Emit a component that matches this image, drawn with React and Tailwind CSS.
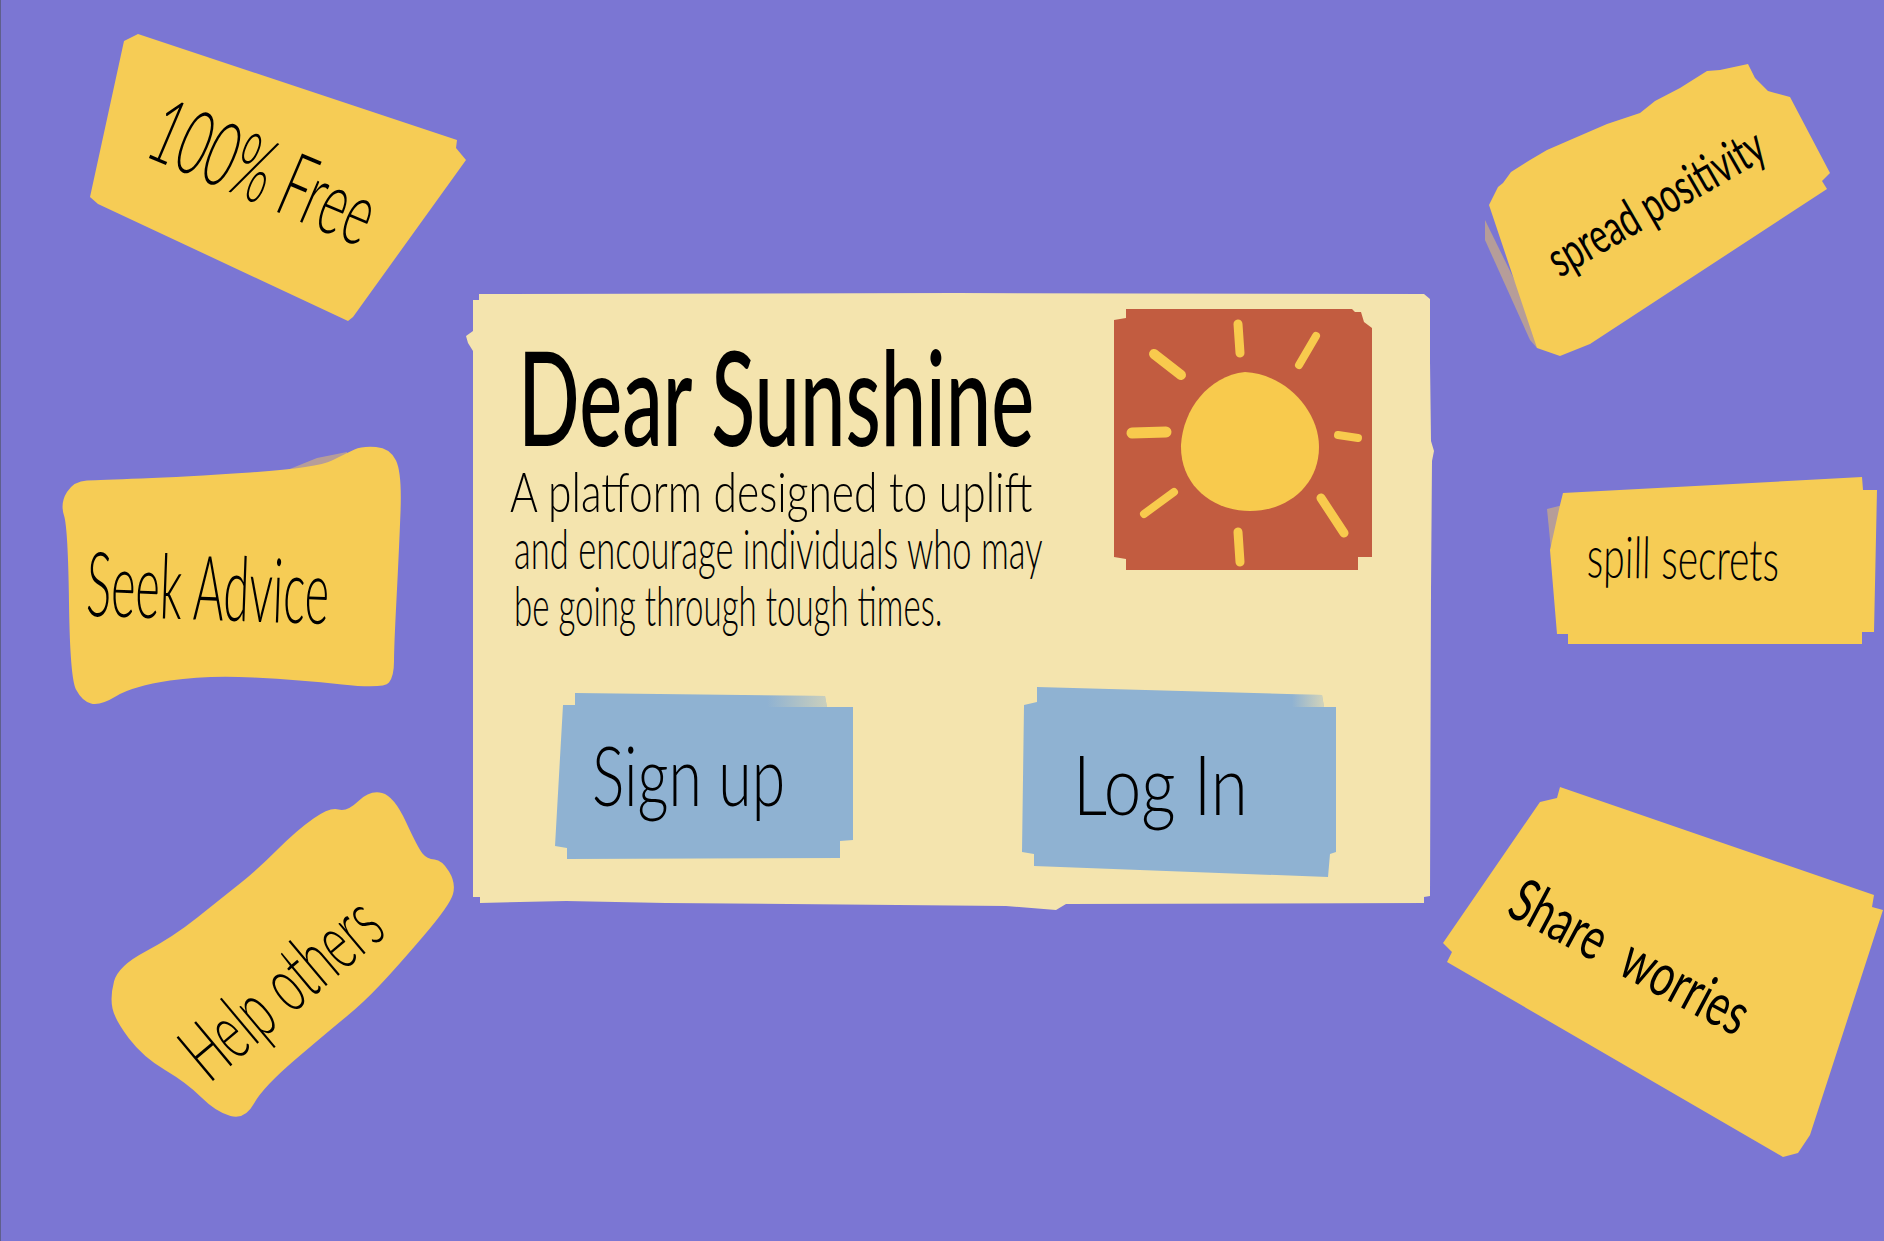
const HAND = "font-['Lato',sans-serif] text-black whitespace-nowrap leading-none";

// rounds a rough outline off through the midpoints of its edges
const smoothPath = (points) => {
  const pts = points.trim().split(/\s+/).map((p) => p.split(",").map(Number));
  const mid = (a, b) => [(a[0] + b[0]) / 2, (a[1] + b[1]) / 2];
  const start = mid(pts[pts.length - 1], pts[0]);
  let d = `M${start[0]},${start[1]}`;
  pts.forEach((p, i) => {
    const m = mid(p, pts[(i + 1) % pts.length]);
    d += ` Q${p[0]},${p[1]} ${m[0]},${m[1]}`;
  });
  return d + " Z";
};

// torn paper notes, points are taken in page coordinates
const Note = ({ box, viewBox, points, shadow, soft, children }) => (
  <div className={`absolute ${box}`}>
    <svg className="block w-full h-full overflow-visible" viewBox={viewBox}>
      {shadow && <polygon points={shadow} fill="#c9ab85" opacity="0.75" />}
      {soft ? <path d={smoothPath(points)} fill="#f6cc55" /> : <polygon points={points} fill="#f6cc55" />}
    </svg>
    {children}
  </div>
);

const Sun = () => (
  <svg className="block w-[258px] h-[261px]" viewBox="1114 309 258 261">
    <polygon
      points="1126,309 1352,309 1355,312 1361,312 1364,322 1372,328 1372,557 1358,557 1358,570 1126,570 1126,559 1114,557 1114,320 1126,318"
      fill="#c25c40"
    />
    <path
      d="M1181,445 C1183,410 1208,376 1245,372 C1285,374 1319,410 1319,447 C1319,485 1288,511 1250,511 C1212,511 1180,485 1181,445 Z"
      fill="#f8ca4d"
    />
    <g stroke="#f8ca4d" strokeLinecap="round" fill="none">
      <path d="M1238,324 L1240,353" strokeWidth="9" />
      <path d="M1316,336 L1299,365" strokeWidth="8" />
      <path d="M1154,354 L1181,375" strokeWidth="10" />
      <path d="M1132,433 L1166,432" strokeWidth="11" />
      <path d="M1338,435 L1358,438" strokeWidth="8" />
      <path d="M1174,492 L1144,514" strokeWidth="8" />
      <path d="M1321,498 L1344,533" strokeWidth="9" />
      <path d="M1238,532 L1240,562" strokeWidth="9" />
    </g>
  </svg>
);

export default function App() {
  return (
    <div className="relative w-full h-[1241px] overflow-hidden bg-[#7b76d3] border-l border-[#5f5f8c] pl-[465px] pt-[291px]">
      {/* Main card */}
      <div className="relative w-[970px] h-[619px] bg-[#f4e4ae] flex flex-col pl-[44px] pt-[18px] [clip-path:polygon(13px_3px,490px_2px,958px_3px,964px_8px,964px_70px,965px_150px,968px_160px,966px_170px,965px_300px,964px_605px,958px_606px,958px_612px,600px_613px,590px_619px,540px_615px,200px_612px,100px_610px,14px_612px,14px_606px,7px_606px,7px_60px,2px_52px,0px_45px,7px_40px,7px_9px,13px_9px)]">
        <div className="flex items-start">
          <div className="w-[604px] shrink-0 pt-[20px]">
            <h1 className={`${HAND} text-[132px] font-medium origin-left scale-x-[0.615] h-[134px] ml-[8px]`}>
              Dear Sunshine
            </h1>
            <div className="flex flex-col text-[56px] font-light">
              <p className={`${HAND} origin-left scale-x-[0.76] h-[57px]`}>A platform designed to uplift</p>
              <p className={`${HAND} origin-left scale-x-[0.617] h-[57px] ml-[4px]`}>and encourage individuals who may</p>
              <p className={`${HAND} origin-left scale-x-[0.59] h-[57px] ml-[4px]`}>be going through tough times.</p>
            </div>
          </div>
          <Sun />
        </div>

        {/* Actions */}
        <div className="flex items-start mt-[53px] pl-[45px]">
          <button className="relative w-[298px] h-[166px] mt-[6px] bg-[#8fb2d2] flex items-center pl-[37px] [clip-path:polygon(20px_0px,270px_3px,272px_14px,298px_14px,298px_147px,285px_148px,285px_165px,12px_166px,12px_155px,0px_153px,8px_12px,20px_12px)]">
            <span className="absolute left-[212px] top-[1px] w-[72px] h-[13px] bg-linear-to-r from-transparent to-[#f4e4ae]/70" />
            <span className={`${HAND} text-[82px] font-light origin-left scale-x-[0.74] -mt-[4px]`}>Sign up</span>
          </button>
          <button className="relative w-[314px] h-[190px] ml-[169px] bg-[#8fb2d2] flex items-center pl-[51px] [clip-path:polygon(15px_0px,300px_8px,302px_20px,314px_20px,314px_165px,308px_167px,306px_190px,12px_179px,12px_167px,0px_165px,2px_18px,15px_15px)]">
            <span className="absolute left-[270px] top-[6px] w-[38px] h-[14px] bg-linear-to-r from-transparent to-[#f4e4ae]/80" />
            <span className={`${HAND} text-[82px] font-light origin-left scale-x-[0.82] mt-[2px]`}>Log In</span>
          </button>
        </div>
      </div>

      {/* Notes around the card */}
      <Note
        box="left-[89px] top-[34px] w-[377px] h-[287px]"
        viewBox="90 34 377 287"
        points="124,41 138,34 457,140 456,148 466,160 353,317 348,321 98,204 90,197"
      >
        <span className={`${HAND} absolute left-[175px] top-[135px] -translate-x-1/2 -translate-y-1/2 rotate-[23deg] scale-x-[0.56] text-[90px] font-light`}>
          100% Free
        </span>
      </Note>
      <Note
        soft
        box="left-[62px] top-[448px] w-[337px] h-[254px]"
        viewBox="63 448 337 254"
        points="60,503 74,481 100,480 183,477 317,468 347,453 362,446 390,448 402,473 399,551 394,647 394,676 384,689 300,680 207,675 133,686 100,706 82,701 70,678 68,528"
        shadow="270,477 317,458 347,452 347,465 300,477"
      >
        <span className={`${HAND} absolute left-[145px] top-[137px] -translate-x-1/2 -translate-y-1/2 rotate-[2deg] scale-x-[0.52] text-[90px] font-light`}>
          Seek Advice
        </span>
      </Note>
      <Note
        soft
        box="left-[112px] top-[793px] w-[340px] h-[323px]"
        viewBox="113 793 340 323"
        points="110,997 118,966 173,937 223,897 257,870 297,830 330,807 347,812 370,790 394,796 418,848 427,859 442,860 456,883 450,905 397,967 363,1003 330,1030 263,1087 245,1120 216,1112 187,1083 143,1057 115,1020"
      >
        <span className={`${HAND} absolute left-[166px] top-[192px] -translate-x-1/2 -translate-y-1/2 -rotate-[40deg] scale-x-[0.58] text-[80px] font-light`}>
          Help others
        </span>
      </Note>
      <Note
        box="left-[1488px] top-[64px] w-[342px] h-[292px]"
        viewBox="1489 64 342 292"
        points="1489,205 1498,187 1503,183 1511,172 1530,160 1547,150 1570,140 1607,124 1640,113 1655,101 1680,88 1707,71 1720,70 1748,64 1755,78 1768,91 1775,93 1790,97 1830,173 1822,181 1827,189 1590,344 1560,356 1537,348"
        shadow="1485,220 1537,326 1537,348 1530,340 1485,240"
      >
        <span className={`${HAND} absolute left-[166px] top-[137px] -translate-x-1/2 -translate-y-1/2 -rotate-[30deg] scale-x-[0.67] text-[50px] font-normal`}>
          spread positivity
        </span>
      </Note>
      <Note
        box="left-[1549px] top-[477px] w-[328px] h-[167px]"
        viewBox="1550 477 328 167"
        points="1563,493 1862,477 1863,490 1877,490 1874,632 1862,632 1862,644 1568,644 1568,634 1557,634 1550,550 1560,505"
        shadow="1547,509 1563,505 1552,560"
      >
        <span className={`${HAND} absolute left-[133px] top-[80px] -translate-x-1/2 -translate-y-1/2 rotate-[1deg] scale-x-[0.67] text-[58px] font-light`}>
          spill secrets
        </span>
      </Note>
      <Note
        box="left-[1442px] top-[787px] w-[441px] h-[370px]"
        viewBox="1443 787 441 370"
        points="1560,787 1874,895 1872,907 1883,910 1810,1135 1798,1153 1783,1157 1447,962 1452,952 1443,943 1540,802 1557,798"
      >
        <span className={`${HAND} absolute left-[188px] top-[168px] -translate-x-1/2 -translate-y-1/2 rotate-[28deg] scale-x-[0.69] text-[60px] font-normal [word-spacing:0.35em]`}>
          Share worries
        </span>
      </Note>
    </div>
  );
}
